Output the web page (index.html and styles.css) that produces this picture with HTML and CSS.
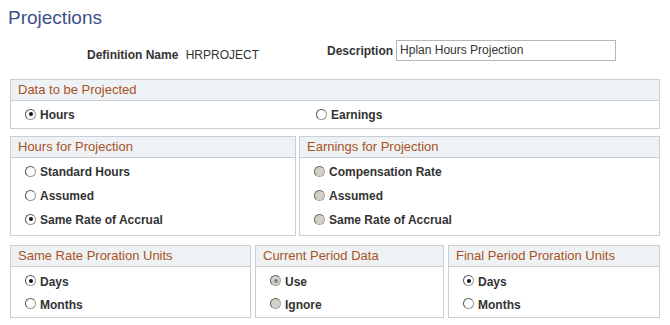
FILE: index.html
```html
<!DOCTYPE html>
<html lang="en">

<head>
    <meta charset="UTF-8">
    <title>Projections</title>
    <link rel="stylesheet" href="styles.css">
</head>

<body>
    <h1 class="page-title">Projections</h1>

    <div class="key-row">
        <div class="field def-field">
            <span class="label">Definition Name</span>
            <span class="value">HRPROJECT</span>
        </div>
        <div class="field desc-field">
            <span class="label">Description</span>
            <span class="text-box">Hplan Hours Projection</span>
        </div>
    </div>

    <section class="group full">
        <h2 class="group-head">Data to be Projected</h2>
        <div class="group-body two-col">
            <div class="radio"><span class="dot on"></span>Hours</div>
            <div class="radio"><span class="dot"></span>Earnings</div>
        </div>
    </section>

    <div class="row row-two">
        <section class="group">
            <h2 class="group-head">Hours for Projection</h2>
            <div class="group-body">
                <div class="radio"><span class="dot"></span>Standard Hours</div>
                <div class="radio"><span class="dot"></span>Assumed</div>
                <div class="radio"><span class="dot on"></span>Same Rate of Accrual</div>
            </div>
        </section>
        <section class="group">
            <h2 class="group-head">Earnings for Projection</h2>
            <div class="group-body">
                <div class="radio"><span class="dot off"></span>Compensation Rate</div>
                <div class="radio"><span class="dot off"></span>Assumed</div>
                <div class="radio"><span class="dot off"></span>Same Rate of Accrual</div>
            </div>
        </section>
    </div>

    <div class="row row-three">
        <section class="group">
            <h2 class="group-head">Same Rate Proration Units</h2>
            <div class="group-body short">
                <div class="radio"><span class="dot on"></span>Days</div>
                <div class="radio"><span class="dot"></span>Months</div>
            </div>
        </section>
        <section class="group">
            <h2 class="group-head">Current Period Data</h2>
            <div class="group-body short">
                <div class="radio"><span class="dot off on"></span>Use</div>
                <div class="radio"><span class="dot off"></span>Ignore</div>
            </div>
        </section>
        <section class="group">
            <h2 class="group-head">Final Period Proration Units</h2>
            <div class="group-body short">
                <div class="radio"><span class="dot on"></span>Days</div>
                <div class="radio"><span class="dot"></span>Months</div>
            </div>
        </section>
    </div>
</body></html>
```

FILE: styles.css
```css
* {
    box-sizing: border-box;
    margin: 0;
    padding: 0;
}

body {
    font-family: "Liberation Sans", Arial, sans-serif;
    font-size: 12px;
    color: #333;
    background: white;
    padding: 0 11px 0 10px;
    width: 670px;
}

.page-title {
    font-size: 19px;
    font-weight: normal;
    color: #3d5088;
    margin-left: -2px;
    padding-top: 7px;
    height: 40px;
    line-height: 22px;
}

.key-row {
    display: flex;
    height: 39px;
    align-items: flex-start;
}

.def-field {
    padding-left: 77px;
    padding-top: 8px;
}

.desc-field {
    display: flex;
    align-items: center;
    padding-left: 68px;
}

.label {
    font-weight: bold;
    color: #333;
}

.def-field .value {
    margin-left: 4px;
}

.text-box {
    display: inline-block;
    width: 220px;
    height: 21px;
    border: 1px solid #b7b7b7;
    margin-left: 3px;
    padding: 3px 3px;
    line-height: 13px;
}

.group {
    border: 1px solid #c9ced4;
}

.group-head {
    font-size: 13px;
    font-weight: normal;
    color: #a9521f;
    background: #eef2f4;
    border-bottom: 1px solid #c9ced4;
    height: 21px;
    line-height: 20px;
    padding-left: 7px;
}

.group-body {
    padding: 2px 0 3px 14px;
}

.full .group-body {
    padding: 2px 0 1px 14px;
}

.group-body.short {
    padding: 3px 0 1px 14px;
}

.two-col {
    display: grid;
    grid-template-columns: 291px 1fr;
}

.radio {
    display: flex;
    align-items: center;
    height: 24px;
    font-weight: bold;
    color: #333;
}

.short .radio {
    height: 23px;
}

.dot {
    width: 11px;
    height: 11px;
    border-radius: 50%;
    border: 1px solid #9a9a9a;
    border-top-color: #555;
    border-left-color: #555;
    background: white;
    margin-right: 4px;
    position: relative;
    top: -1px;
}

.dot.on::after {
    content: "";
    position: absolute;
    left: 2.5px;
    top: 2.5px;
    width: 4px;
    height: 4px;
    border-radius: 50%;
    background: #111;
}

.dot.off {
    background: #d4d0c8;
    border-color: #a8a8a8;
    border-top-color: #666;
    border-left-color: #666;
}

.dot.off.on::after {
    background: #888;
}

.row {
    display: grid;
    margin-top: 7px;
}

.full {
    width: 650px;
}

.row-two {
    grid-template-columns: 286px 361px;
    column-gap: 3px;
    width: 650px;
}

.row-three {
    grid-template-columns: 241px 189px 212px;
    column-gap: 4px;
    width: 650px;
    margin-top: 9px;
}
```
